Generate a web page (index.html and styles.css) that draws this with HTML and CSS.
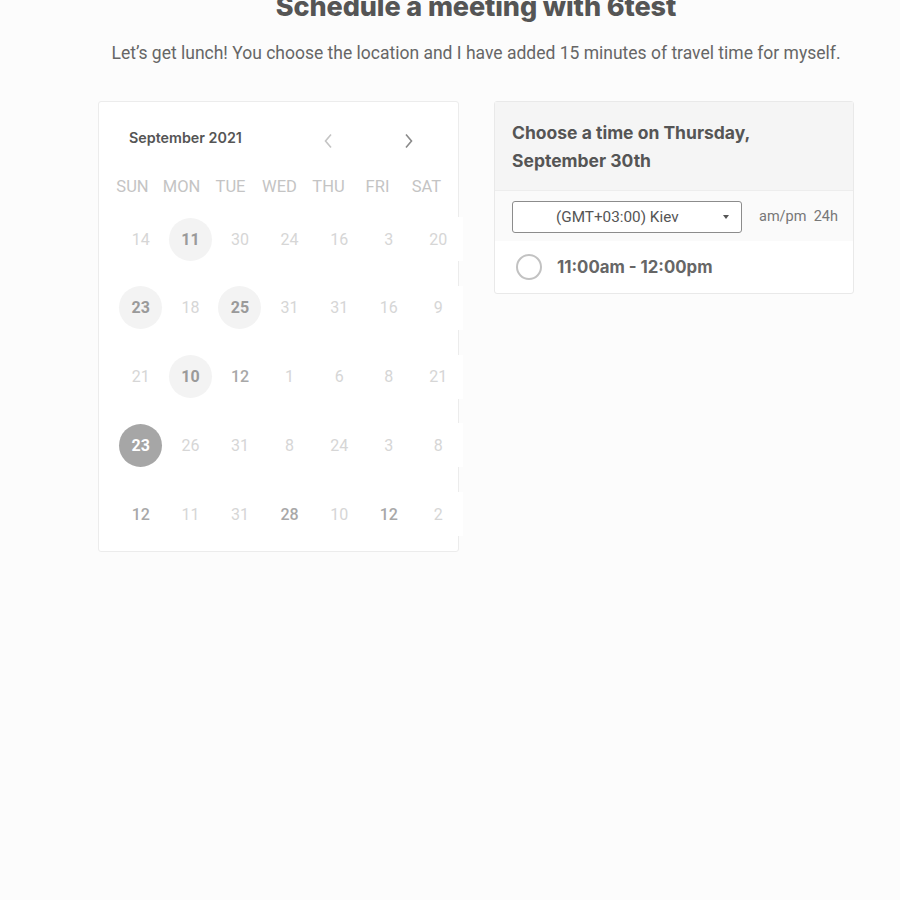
FILE: index.html
```html
<!DOCTYPE html>
<html lang="en">
<head>
<meta charset="utf-8">
<title>Schedule a meeting</title>
<link rel="stylesheet" href="styles.css">
</head>
<body>
<main class="page">
  <h1 class="title">Schedule a meeting with 6test</h1>
  <p class="subtitle">Let’s get lunch! You choose the location and I have added 15 minutes of travel time for myself.</p>

  <div class="columns">
    <section class="calendar">
      <div class="cal-head">
        <span class="month">September 2021</span>
        <button class="nav prev" aria-label="Previous month">
          <svg width="10" height="16" viewBox="0 0 10 16"><path d="M8 1.5 L2.5 8 L8 14.5" fill="none" stroke="#c4c4c4" stroke-width="1.6"/></svg>
        </button>
        <button class="nav next" aria-label="Next month">
          <svg width="10" height="16" viewBox="0 0 10 16"><path d="M2 1.5 L7.5 8 L2 14.5" fill="none" stroke="#8a8a8a" stroke-width="1.6"/></svg>
        </button>
      </div>
      <div class="weekdays">
        <span>SUN</span><span>MON</span><span>TUE</span><span>WED</span><span>THU</span><span>FRI</span><span>SAT</span>
      </div>
      <div class="dates">
        <span class="d">14</span><span class="d"><b class="avail">11</b></span><span class="d">30</span><span class="d">24</span><span class="d">16</span><span class="d">3</span><span class="d">20</span>
        <span class="d"><b class="avail">23</b></span><span class="d">18</span><span class="d"><b class="avail">25</b></span><span class="d">31</span><span class="d">31</span><span class="d">16</span><span class="d">9</span>
        <span class="d">21</span><span class="d"><b class="avail">10</b></span><span class="d mid">12</span><span class="d">1</span><span class="d">6</span><span class="d">8</span><span class="d">21</span>
        <span class="d"><b class="selected">23</b></span><span class="d">26</span><span class="d">31</span><span class="d">8</span><span class="d">24</span><span class="d">3</span><span class="d">8</span>
        <span class="d mid">12</span><span class="d">11</span><span class="d">31</span><span class="d mid">28</span><span class="d">10</span><span class="d mid">12</span><span class="d">2</span>
      </div>
    </section>

    <section class="times">
      <div class="times-head">Choose a time on Thursday,<br>September 30th</div>
      <div class="tz-row">
        <div class="select">
          <span class="select-text">(GMT+03:00) Kiev</span>
          <span class="caret"></span>
        </div>
        <span class="fmt">am/pm&nbsp; 24h</span>
      </div>
      <div class="slot">
        <span class="radio"></span>
        <span class="slot-text">11:00am - 12:00pm</span>
      </div>
    </section>
  </div>
</main>
</body>
</html>
```

FILE: styles.css
```css
html, body {
  margin: 0;
  padding: 0;
  background: #fcfcfc;
}

.page {
  width: 756px;
  margin-left: 98px;
}

.title {
  margin: -9px -40px 0;
  font-family: Inter, "Liberation Sans", sans-serif;
  font-weight: 800;
  font-size: 27px;
  line-height: 32px;
  color: #555;
  text-align: center;
  letter-spacing: -0.1px;
}

.subtitle {
  margin: 17px -40px 0;
  font-family: Roboto, "Liberation Sans", sans-serif;
  font-size: 17.5px;
  line-height: 26px;
  color: #666;
  text-align: center;
}

.columns {
  margin-top: 35px;
  display: flex;
  gap: 35px;
  align-items: flex-start;
}

.calendar {
  width: 361px;
  box-sizing: border-box;
  height: 451px;
  background: #fff;
  border: 1px solid #ececec;
  border-radius: 3px;
}

.cal-head {
  height: 70px;
  display: flex;
  align-items: center;
  padding-left: 30px;
}

.month {
  font-family: Inter, "Liberation Sans", sans-serif;
  font-weight: 600;
  font-size: 14.3px;
  color: #555;
  width: 194px;
}

.nav {
  border: 0;
  background: none;
  padding: 0;
  margin: 8px 0 0;
  width: 10px;
  height: 16px;
  display: flex;
}

.nav.next {
  margin-left: 71px;
}

.weekdays {
  display: grid;
  grid-template-columns: repeat(7, 49px);
  margin-left: 9px;
  height: 28px;
  align-items: center;
  font-family: Roboto, "Liberation Sans", sans-serif;
  font-size: 16.5px;
  color: #c4c4c4;
  text-align: center;
}

.dates {
  display: grid;
  grid-template-columns: repeat(7, 49.6px);
  grid-auto-rows: 44px;
  row-gap: 24.75px;
  margin-top: 17px;
  margin-left: 17px;
  width: 347px;
  font-family: Roboto, "Liberation Sans", sans-serif;
  font-size: 16px;
  color: #d6d6d6;
}

.d {
  display: flex;
  align-items: center;
  justify-content: center;
  background: #fff;
}

.d.mid {
  color: #a8a8a8;
  font-weight: 500;
}

.avail, .selected {
  width: 43px;
  height: 43px;
  border-radius: 50%;
  display: flex;
  align-items: center;
  justify-content: center;
  font-weight: 700;
}

.avail {
  background: #f3f3f3;
  color: #9a9a9a;
}

.selected {
  background: #a6a6a6;
  color: #fff;
}

.times {
  width: 361px;
  box-sizing: border-box;
  background: #fff;
  border: 1px solid #e9e9e9;
  border-radius: 3px;
}

.times-head {
  background: #f5f5f5;
  padding: 17px 17px 15px;
  font-family: Inter, "Liberation Sans", sans-serif;
  font-weight: 700;
  font-size: 17.5px;
  line-height: 28px;
  color: #555;
  border-bottom: 1px solid #ededed;
}

.tz-row {
  height: 50px;
  box-sizing: border-box;
  padding: 10px 0 0 17px;
  background: #fafafa;
  display: flex;
  align-items: flex-start;
}

.select {
  width: 230px;
  height: 32px;
  box-sizing: border-box;
  border: 1px solid #8c8c8c;
  border-radius: 3px;
  background: #fff;
  display: flex;
  align-items: center;
  padding-left: 43px;
  font-family: Roboto, "Liberation Sans", sans-serif;
  font-size: 15.3px;
  color: #555;
}

.select-text {
  width: 167px;
}

.caret {
  width: 0;
  height: 0;
  border-left: 3.5px solid transparent;
  border-right: 3.5px solid transparent;
  border-top: 4px solid #555;
}

.fmt {
  margin-left: 17px;
  line-height: 32px;
  font-family: Roboto, "Liberation Sans", sans-serif;
  font-size: 14.5px;
  color: #777;
}

.slot {
  height: 52px;
  display: flex;
  align-items: center;
  padding-left: 21px;
}

.radio {
  width: 26px;
  height: 26px;
  box-sizing: border-box;
  border: 2px solid #c2c2c2;
  border-radius: 50%;
}

.slot-text {
  margin-left: 15px;
  font-family: Inter, "Liberation Sans", sans-serif;
  font-weight: 700;
  font-size: 16.8px;
  color: #666;
}
```
